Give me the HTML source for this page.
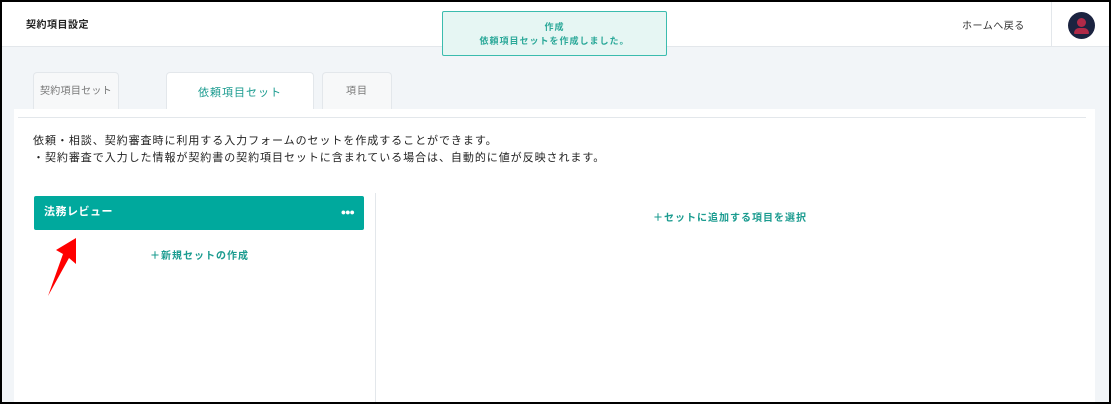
<!DOCTYPE html>
<html><head><meta charset="utf-8"><style>
*{margin:0;padding:0;box-sizing:border-box}
body{width:1111px;height:404px;overflow:hidden;background:#000;font-family:"Liberation Sans","Noto Sans CJK JP",sans-serif;position:relative}
.frame{position:absolute;left:2px;top:2px;width:1107px;height:400px;background:#f2f5f8;overflow:hidden}
.hdr{position:absolute;left:0;top:0;width:100%;height:45px;background:#fff;border-bottom:1px solid #e3e7eb}
.abs{position:absolute}
.tab{position:absolute;top:70px;height:38px;border:1px solid #e3e7eb;border-bottom:none;border-radius:4px 4px 0 0;background:#f7f8f9;font-size:10px;color:#777;text-align:center;line-height:38px;letter-spacing:1px;white-space:nowrap}
</style></head><body><div class="frame">
<div class="hdr">
<div class="abs" style="left:24px;top:14px;font-size:10px;color:#222;font-weight:bold;letter-spacing:0.5px">契約項目設定</div>
<div class="abs" style="left:960px;top:15px;font-size:10px;color:#333;letter-spacing:0.5px">ホームへ戻る</div>
<div class="abs" style="left:1049px;top:0;width:1px;height:45px;background:#e3e7eb"></div>
<div class="abs" style="left:1066px;top:10px;width:27px;height:27px;border-radius:50%;background:#1b2340;overflow:hidden">
<div class="abs" style="left:9px;top:6px;width:9px;height:9px;border-radius:50%;background:#b02a48"></div>
<div class="abs" style="left:6px;top:16px;width:15px;height:6px;border-radius:5px 5px 1px 1px;background:#b02a48"></div></div>
</div>
<div class="abs" style="left:440px;top:9px;width:225px;height:45px;background:#e6f6f3;border:1px solid #3bbcae;border-radius:2px;text-align:center;font-size:9px;color:#2aa898;line-height:14px;padding-top:8px;letter-spacing:1px;font-weight:bold">作成<br>依頼項目セットを作成しました。</div>
<div class="tab" style="left:31px;width:86px;letter-spacing:0.3px;padding:0">契約項目セット</div>
<div class="tab" style="left:164px;width:148px;background:#fff;color:#1a9b8f;height:40px;line-height:40px;font-size:11px">依頼項目セット</div>
<div class="tab" style="left:320px;width:70px">項目</div>
<div class="abs" style="left:12px;top:107px;width:1081px;height:300px;background:#fff">
<div class="abs" style="left:4px;top:8px;width:1068px;height:1px;background:#e3e7eb"></div>
<div class="abs" style="left:19px;top:24px;font-size:11px;color:#222;line-height:17px;letter-spacing:0.95px">依頼・相談、契約審査時に利用する入力フォームのセットを作成することができます。<br>・契約審査で入力した情報が契約書の契約項目セットに含まれている場合は、自動的に値が反映されます。</div>
<div class="abs" style="left:361px;top:84px;width:1px;height:220px;background:#e3e7eb"></div>
<div class="abs" style="left:20px;top:87px;width:330px;height:34px;background:#00a99d;border-radius:2px;color:#fff;font-size:11px;font-weight:bold;line-height:32px;padding-left:10px;letter-spacing:0.5px">法務レビュー<span style="position:absolute;right:10px;top:0;font-size:9px;letter-spacing:-1px">●●●</span></div>
<div class="abs" style="left:136px;top:138px;font-size:10px;color:#1a9b8f;font-weight:bold;letter-spacing:1px">＋新規セットの作成</div>
<div class="abs" style="left:639px;top:100px;font-size:10px;color:#1a9b8f;font-weight:bold;letter-spacing:1px">＋セットに追加する項目を選択</div>
</div>
<svg class="abs" style="left:40px;top:232px" width="40" height="66" viewBox="0 0 40 66"><path d="M34 4 L34 30 L27 24 L6 62 L21 20 L14 16 Z" fill="#f00"/></svg>
</div></body></html>
